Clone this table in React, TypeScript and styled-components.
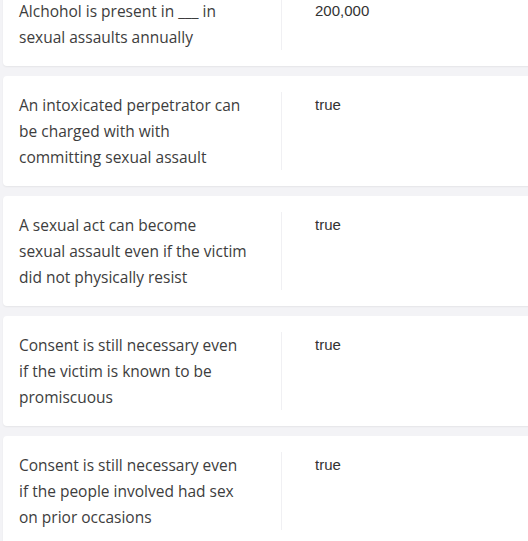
import React from "react";
import styled, { createGlobalStyle } from "styled-components";

const rows = [
  { q: ["Alchohol is present in ___ in", "sexual assaults annually"], a: "200,000" },
  { q: ["An intoxicated perpetrator can", "be charged with with", "committing sexual assault"], a: "true" },
  { q: ["A sexual act can become", "sexual assault even if the victim", "did not physically resist"], a: "true" },
  { q: ["Consent is still necessary even", "if the victim is known to be", "promiscuous"], a: "true" },
  { q: ["Consent is still necessary even", "if the people involved had sex", "on prior occasions"], a: "true" },
];

const App = () => {
  return (
    <>
      <GlobalStyle />
      <List>
        {rows.map((row, i) => (
          <Card key={i}>
            <Question>
              {row.q.map((line, j) => (
                <Line key={j}>{line}</Line>
              ))}
            </Question>
            <Answer>{row.a}</Answer>
          </Card>
        ))}
      </List>
    </>
  );
};

export default App;

// ======== STYLED COMPONENTS ========

const GlobalStyle = createGlobalStyle`
  html, body {
    margin: 0;
    padding: 0;
    background: #f3f3f6;
    overflow: hidden;
  }
`;

const List = styled.div`
  display: flex;
  flex-direction: column;
  gap: 10px;
  margin-top: -18px;
  padding-left: 3px;
  width: 560px;
`;

const Card = styled.div`
  display: flex;
  background: #ffffff;
  border-radius: 4px;
  box-shadow: 0 1px 2px rgba(0, 0, 0, 0.06);
  padding: 16px 0 16px 16px;
`;

const Question = styled.div`
  width: 229px;
  padding-right: 33px;
  border-right: 1px solid #f0f0f3;
  font-family: "Open Sans", sans-serif;
  font-size: 15.5px;
  line-height: 26px;
  color: #3d3d3d;
`;

const Line = styled.div`
  white-space: nowrap;
`;

const Answer = styled.div`
  padding-left: 33px;
  font-family: "Liberation Sans", Arial, sans-serif;
  font-size: 15px;
  line-height: 26px;
  color: #333333;
`;
